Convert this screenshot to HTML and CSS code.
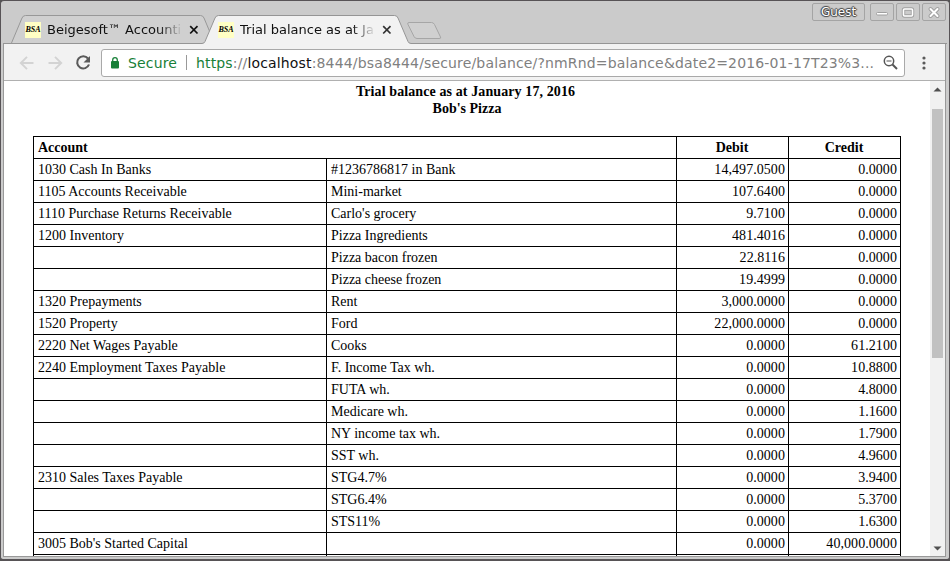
FILE: index.html
```
<!DOCTYPE html>
<html lang="en">
<head>
<meta charset="utf-8">
<title>Trial balance as at January 17, 2016</title>
<link rel="stylesheet" href="styles.css">
</head>
<body>
<div class="window">
  <header class="titlebar">
    <svg class="tab-shapes" width="950" height="44" viewBox="0 0 950 44">
      <path d="M11.500 43L22 18Q23 15.500 25.500 15.500H200.500Q203 15.500 204 18L214.500 43" fill="#d0d0d0" stroke="#989898"/>
      <path d="M3 43.500H204L215 18Q216 15.500 218.500 15.500H394.500Q397 15.500 398 18L409 43.500H947V45H3Z" fill="#f2f2f2"/>
      <path d="M3 43.500H202Q204 43.500 205 41.500L215 18Q216 15.500 218.500 15.500H394.500Q397 15.500 398 18L408 41.500Q409 43.500 411 43.500H947" fill="none" stroke="#959595"/>
      <path d="M409 22.500H431.500Q433.500 22.500 434.500 24.500L440.500 37Q441.500 38.500 439 38.500H417Q415 38.500 414 36.500L408 24.500Q407 22.500 409 22.500Z" fill="#d0d0d0" stroke="#a6a6a6"/>
    </svg>
    <div class="tab">
      <span class="favicon">BSA</span><span class="tab-title">Beigesoft™ Accounti</span>
      <svg class="close" width="10" height="10" viewBox="0 0 10 10"><path d="M1.200 1.200L8.500 8.500M8.500 1.200L1.200 8.500" stroke="#111" stroke-width="1.700"/></svg>
    </div>
    <div class="tab">
      <span class="favicon">BSA</span><span class="tab-title">Trial balance as at Ja</span>
      <svg class="close" width="10" height="10" viewBox="0 0 10 10"><path d="M1.200 1.200L8.500 8.500M8.500 1.200L1.200 8.500" stroke="#333" stroke-width="1.700"/></svg>
    </div>
    <div class="controls">
      <span class="control guest">Guest</span>
      <span class="control"><svg width="22" height="17" viewBox="0 0 22 17"><rect x="5.500" y="8.500" width="11" height="2.500" rx="1" fill="#fff" stroke="#a0a0a0"/></svg></span>
      <span class="control"><svg width="22" height="17" viewBox="0 0 22 17"><rect x="6.500" y="5" width="9" height="7" rx="1" fill="none" stroke="#a0a0a0" stroke-width="3.400"/><rect x="6.500" y="5" width="9" height="7" rx="1" fill="none" stroke="#fff" stroke-width="1.600"/></svg></span>
      <span class="control"><svg width="22" height="17" viewBox="0 0 22 17"><path d="M7.500 5L14.500 12M14.500 5L7.500 12" stroke="#a0a0a0" stroke-width="4" stroke-linecap="round"/><path d="M7.500 5L14.500 12M14.500 5L7.500 12" stroke="#fff" stroke-width="2" stroke-linecap="round"/></svg></span>
    </div>
  </header>
  <nav class="toolbar">
    <svg class="nav-icon" width="16" height="16" viewBox="0 0 16 16"><path d="M14.500 8H2M8 1.800L1.800 8L8 14.200" fill="none" stroke="#d3d3d3" stroke-width="1.900"/></svg>
    <svg class="nav-icon" width="16" height="16" viewBox="0 0 16 16"><path d="M1.500 8H14M8 1.800L14.200 8L8 14.200" fill="none" stroke="#d3d3d3" stroke-width="1.900"/></svg>
    <svg class="nav-icon" width="16" height="16" viewBox="0 0 16 16"><path d="M13 3.500A6.100 6.100 0 1 0 14 9.500" fill="none" stroke="#5a5a5a" stroke-width="2.100"/><path d="M15 1V7.500H8.500Z" fill="#5a5a5a"/></svg>
    <div class="address">
      <svg class="lock" width="8" height="12" viewBox="0 0 8 12"><rect y="4" width="8" height="7.500" rx="1" fill="#188038"/><path d="M1.700 5V3A2.300 2.300 0 0 1 6.300 3V5" fill="none" stroke="#188038" stroke-width="1.300"/></svg>
      <span class="secure">Secure</span>
      <span class="divider"></span>
      <span class="url"><span class="scheme">https</span>://<span class="host">localhost</span>:8444/bsa8444/secure/balance/?nmRnd=balance&amp;date2=2016-01-17T23%3...</span>
      <svg class="lens" width="15" height="15" viewBox="0 0 15 15"><circle cx="6" cy="6" r="4.700" fill="none" stroke="#555" stroke-width="1.500"/><path d="M9.500 9.500L14 14" stroke="#555" stroke-width="2"/><path d="M3.500 6H8.500" stroke="#555" stroke-width="1.200"/></svg>
    </div>
    <svg class="menu" width="4" height="14" viewBox="0 0 4 14" fill="#5a5a5a"><circle cx="2" cy="2" r="1.600"/><circle cx="2" cy="7" r="1.600"/><circle cx="2" cy="12" r="1.600"/></svg>
  </nav>
  <div class="viewport">
    <main class="page">
      <h1>Trial balance as at January 17, 2016</h1>
      <h2>Bob's Pizza</h2>
      <table>
        <colgroup><col class="c-account"><col class="c-sub"><col class="c-sum"><col class="c-sum"></colgroup>
        <tr><th class="left" colspan="2">Account</th><th>Debit</th><th>Credit</th></tr>
        <tr><td>1030 Cash In Banks</td><td>#1236786817 in Bank</td><td>14,497.0500</td><td>0.0000</td></tr>
        <tr><td>1105 Accounts Receivable</td><td>Mini-market</td><td>107.6400</td><td>0.0000</td></tr>
        <tr><td>1110 Purchase Returns Receivable</td><td>Carlo's grocery</td><td>9.7100</td><td>0.0000</td></tr>
        <tr><td>1200 Inventory</td><td>Pizza Ingredients</td><td>481.4016</td><td>0.0000</td></tr>
        <tr><td></td><td>Pizza bacon frozen</td><td>22.8116</td><td>0.0000</td></tr>
        <tr><td></td><td>Pizza cheese frozen</td><td>19.4999</td><td>0.0000</td></tr>
        <tr><td>1320 Prepayments</td><td>Rent</td><td>3,000.0000</td><td>0.0000</td></tr>
        <tr><td>1520 Property</td><td>Ford</td><td>22,000.0000</td><td>0.0000</td></tr>
        <tr><td>2220 Net Wages Payable</td><td>Cooks</td><td>0.0000</td><td>61.2100</td></tr>
        <tr><td>2240 Employment Taxes Payable</td><td>F. Income Tax wh.</td><td>0.0000</td><td>10.8800</td></tr>
        <tr><td></td><td>FUTA wh.</td><td>0.0000</td><td>4.8000</td></tr>
        <tr><td></td><td>Medicare wh.</td><td>0.0000</td><td>1.1600</td></tr>
        <tr><td></td><td>NY income tax wh.</td><td>0.0000</td><td>1.7900</td></tr>
        <tr><td></td><td>SST wh.</td><td>0.0000</td><td>4.9600</td></tr>
        <tr><td>2310 Sales Taxes Payable</td><td>STG4.7%</td><td>0.0000</td><td>3.9400</td></tr>
        <tr><td></td><td>STG6.4%</td><td>0.0000</td><td>5.3700</td></tr>
        <tr><td></td><td>STS11%</td><td>0.0000</td><td>1.6300</td></tr>
        <tr><td>3005 Bob's Started Capital</td><td></td><td>0.0000</td><td>40,000.0000</td></tr>
        <tr><td></td><td></td><td></td><td></td></tr>
      </table>
    </main>
    <div class="scrollbar">
      <svg width="9" height="5" viewBox="0 0 9 5"><path d="M0.500 4.500L4.500 0.500L8.500 4.500Z" fill="#505050"/></svg>
      <div class="thumb"></div>
      <svg width="9" height="5" viewBox="0 0 9 5"><path d="M0.500 0.500L4.500 4.500L8.500 0.500Z" fill="#505050"/></svg>
    </div>
  </div>
</div>
</body>
</html>
```
FILE: styles.css
```
* { box-sizing: border-box; }
body { margin: 0; overflow: hidden; background: #555; }
svg { display: block; flex: none; }
.window {
  position: relative;
  width: 950px;
  height: 561px;
  border: 1px solid #575356;
  border-bottom-width: 2px;
  border-radius: 4px;
  background: #cbcbcb;
  padding: 0 3px 2px 2px;
  display: flex;
  flex-direction: column;
  overflow: hidden;
  font-family: "DejaVu Sans", sans-serif;
}
.titlebar {
  height: 43px;
  flex: none;
  display: flex;
  align-items: flex-start;
  padding-left: 22px;
}
.tab-shapes { position: absolute; left: -1px; top: -1px; }
.tab {
  position: relative;
  width: 193px;
  flex: none;
  height: 17px;
  margin-top: 20px;
  display: flex;
  align-items: center;
}
.favicon {
  width: 16px;
  height: 16px;
  background: #ffffc4;
  font: italic bold 8px/16px "Liberation Serif", serif;
  text-align: center;
  color: #000;
}
.tab-title {
  width: 134px;
  margin-left: 6px;
  white-space: nowrap;
  font-size: 13px;
  line-height: 17px;
  color: #111;
  -webkit-mask-image: linear-gradient(90deg, #000 112px, transparent 136px);
  mask-image: linear-gradient(90deg, #000 112px, transparent 136px);
}
.close { margin-left: 8px; }
.controls {
  position: relative;
  display: flex;
  margin: 2px 0 0 auto;
  gap: 2px;
}
.control {
  width: 24px;
  height: 18px;
  border: 1px solid #a4a4a4;
  border-radius: 2px;
  overflow: hidden;
}
.guest {
  width: 53px;
  margin-right: 3px;
  text-align: center;
  font-size: 12px;
  line-height: 16px;
  color: #fff;
  text-shadow: 0 0 1px #444, 1px 0 1px #444, -1px 0 1px #444, 0 1px 1px #444, 0 -1px 1px #444;
}
.toolbar {
  position: relative;
  height: 37px;
  flex: none;
  border: 1px solid #999;
  border-width: 0 1px;
  background: #f2f2f2;
  display: flex;
  align-items: center;
  padding-left: 15px;
  box-shadow: inset 0 -1px #b0b0b0;
}
.nav-icon { margin-right: 12px; }
.address {
  width: 804px;
  height: 28px;
  margin-left: -2px;
  border: 1px solid #a9a9a9;
  border-radius: 3px;
  background: #fff;
  display: flex;
  align-items: center;
  padding-left: 9px;
  font-size: 14px;
  white-space: nowrap;
}
.secure { margin-left: 9px; width: 50px; color: #188038; letter-spacing: 0.17px; }
.divider { width: 1px; height: 15px; margin: 0 9px 0 8px; background: #999; }
.url { width: 679px; color: #808080; letter-spacing: 0.155px; }
.scheme { color: #188038; }
.host { color: #111; }
.lens { margin-left: 8px; }
.menu { margin-left: 17px; }
.viewport {
  flex: 1;
  min-height: 0;
  display: flex;
  border: 1px solid #999;
  border-top: 0;
  background: #fff;
}
.page {
  flex: 1;
  overflow: hidden;
  padding: 2px 29px 0;
  font: 14px/17px "Liberation Serif", serif;
  color: #000;
}
h1, h2 { margin: 0; padding-right: 3px; font: inherit; font-weight: bold; text-align: center; }
h1 { letter-spacing: 0.1px; }
h2 { margin-bottom: 19px; padding-right: 0; }
table { width: 868px; border-collapse: collapse; table-layout: fixed; }
.c-account { width: 293px; }
.c-sub { width: 350px; }
.c-sum { width: 112px; }
td, th { height: 22px; padding: 0 3px 0 4px; border: 1px solid #000; line-height: 21px; white-space: nowrap; }
th { padding-right: 5px; }
.left { text-align: left; }
td:nth-child(n+3) { text-align: right; letter-spacing: 0.06px; }
.scrollbar {
  width: 15px;
  background: #f1f1f1;
  display: flex;
  flex-direction: column;
  align-items: center;
  padding: 6px 0 5px;
}
.thumb { width: 11px; height: 249px; margin: 17px 0 auto; background: #c1c1c1; }
```
